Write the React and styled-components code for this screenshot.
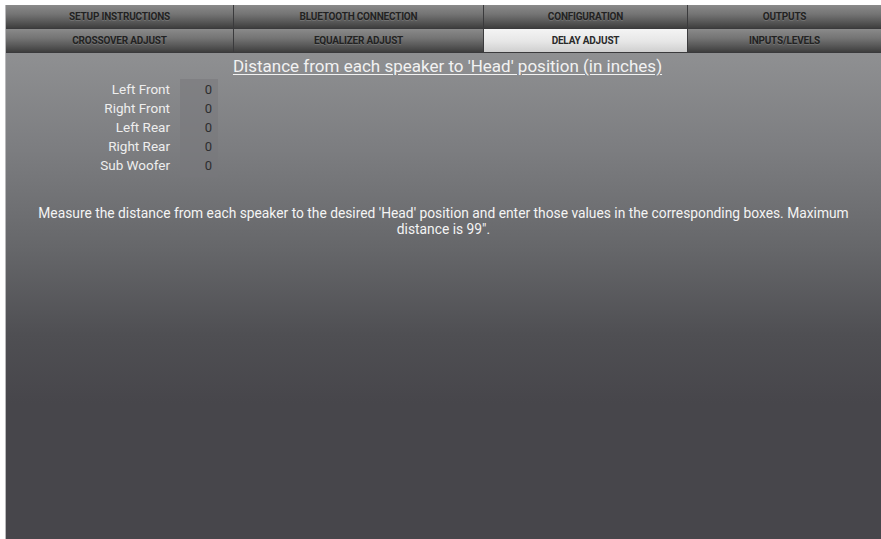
import React from 'react';
import styled, { createGlobalStyle } from 'styled-components';

const GlobalStyle = createGlobalStyle`
  html, body {
    margin: 0;
    padding: 0;
    background: #ffffff;
  }
  body {
    font-family: Roboto, "Liberation Sans", sans-serif;
  }
`;

const tabRows = [
  ['SETUP INSTRUCTIONS', 'BLUETOOTH CONNECTION', 'CONFIGURATION', 'OUTPUTS'],
  ['CROSSOVER ADJUST', 'EQUALIZER ADJUST', 'DELAY ADJUST', 'INPUTS/LEVELS'],
];

const speakers = ['Left Front', 'Right Front', 'Left Rear', 'Right Rear', 'Sub Woofer'];

const App = () => {
  return (
    <Page>
      <GlobalStyle />
      <Screen>
        <Tabs>
          {tabRows.flat().map((t) => (
            <Tab key={t} active={t === 'DELAY ADJUST'}>{t}</Tab>
          ))}
        </Tabs>
        <Content>
          <Title>Distance from each speaker to 'Head' position (in inches)</Title>
          <Form>
            <Labels>
              {speakers.map((s) => (
                <Label key={s}>{s}</Label>
              ))}
            </Labels>
            <Inputs>
              {speakers.map((s) => (
                <Value key={s}>0</Value>
              ))}
            </Inputs>
          </Form>
          <Note>
            Measure the distance from each speaker to the desired 'Head' position and enter those values in the corresponding boxes. Maximum distance is 99".
          </Note>
        </Content>
      </Screen>
    </Page>
  );
};

const Page = styled.div`
  width: 881px;
  height: 539px;
  padding: 5px 0 0 5px;
  box-sizing: border-box;
  overflow: hidden;
`;

const Screen = styled.div`
  width: 100%;
  height: 100%;
  display: flex;
  flex-direction: column;
  border-left: 1px solid #b9b9bb;
  box-sizing: border-box;
  background: #47464b;
`;

const Tabs = styled.div`
  display: grid;
  grid-template-columns: 227px 249px 203px 1fr;
  grid-auto-rows: 23px;
  gap: 1px;
  background: #3a3a3c;
  padding-bottom: 1px;
`;

const Tab = styled.div`
  display: flex;
  align-items: center;
  justify-content: center;
  font-size: 10px;
  font-weight: 700;
  letter-spacing: -0.2px;
  color: ${(p) => (p.active ? '#2a2a2a' : '#222222')};
  background: ${(p) =>
    p.active
      ? 'linear-gradient(180deg, #f4f4f4 0%, #e6e6e6 55%, #cfcfcf 100%)'
      : 'linear-gradient(180deg, #8a8a8a 0%, #747474 40%, #5a5a5a 70%, #3e3e3e 100%)'};
  text-shadow: ${(p) => (p.active ? 'none' : '0 1px 0 rgba(255,255,255,0.15)')};
`;

const Content = styled.div`
  flex: 1;
  display: flex;
  flex-direction: column;
  background: linear-gradient(180deg, #8f9092 0%, #7c7d80 20%, #66676a 40%, #4f4f53 58%, #47464b 72%, #47464b 100%);
`;

const Title = styled.div`
  margin-top: 4px;
  text-align: center;
  font-size: 17px;
  line-height: 18px;
  color: #f2f2f2;
  text-decoration: underline;
  text-underline-offset: 2px;
  padding-left: 8px;
`;

const Form = styled.div`
  display: flex;
  margin-top: 4px;
`;

const Labels = styled.div`
  width: 164px;
  display: flex;
  flex-direction: column;
  padding-top: 1px;
`;

const Label = styled.div`
  height: 19px;
  line-height: 19px;
  text-align: right;
  font-size: 13.5px;
  color: #eeeeee;
`;

const Inputs = styled.div`
  margin-left: 10px;
  width: 38px;
  display: flex;
  flex-direction: column;
  padding-top: 1px;
  padding-bottom: 2px;
  background: rgba(120, 121, 124, 0.55);
`;

const Value = styled.div`
  height: 19px;
  line-height: 19px;
  text-align: right;
  padding-right: 6px;
  font-size: 13px;
  color: #2e2e30;
`;

const Note = styled.div`
  margin-top: 28px;
  padding: 0 20px;
  text-align: center;
  font-size: 13.8px;
  line-height: 16px;
  color: #f4f4f4;
`;

export default App;
